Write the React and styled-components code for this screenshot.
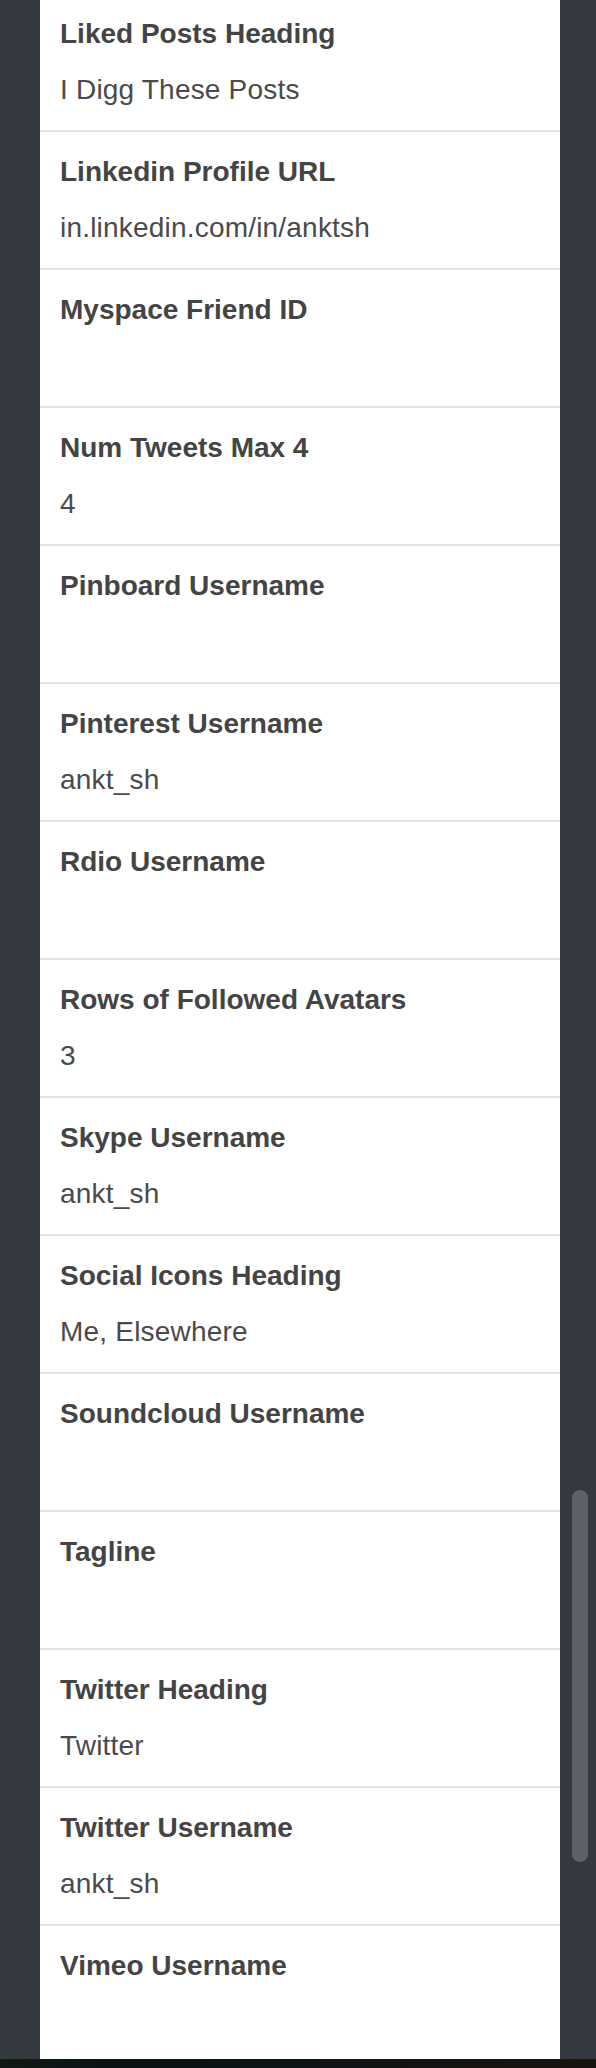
import React from "react";
import styled, { createGlobalStyle } from "styled-components";

const Global = createGlobalStyle`
  html, body { margin: 0; padding: 0; background: #353a40; }
  body { font-family: "Liberation Sans", Arial, Helvetica, sans-serif; }
`;

const Page = styled.div`
  width: 596px;
  height: 2068px;
  display: flex;
  flex-direction: column;
  overflow: hidden;
`;

const Viewport = styled.div`
  height: 2059px;
  flex: none;
  display: flex;
  background: #353a40;
  overflow: hidden;
`;

const Gutter = styled.div`
  width: ${(p) => p.$w}px;
  flex: none;
  position: relative;
`;

const Thumb = styled.div`
  position: absolute;
  left: 12px;
  top: 1490px;
  width: 16px;
  height: 372px;
  border-radius: 8px;
  background: #5c6266;
`;

const Panel = styled.div`
  width: 520px;
  flex: none;
  background: #ffffff;
  margin-top: -6px;
  align-self: flex-start;
  display: flex;
  flex-direction: column;
`;

const Row = styled.div`
  padding: 22px 20px 22px 20px;
  display: flex;
  flex-direction: column;
  gap: 20px;
  border-bottom: 2px solid #e4e4e4;
  &:last-child { border-bottom: none; }
`;

const Label = styled.div`
  font-size: 28px;
  line-height: 36px;
  font-weight: 700;
  color: #444444;
  white-space: nowrap;
`;

const Value = styled.div`
  font-size: 28px;
  line-height: 36px;
  min-height: 36px;
  font-weight: 400;
  color: #4a4a4a;
  letter-spacing: 0.2px;
  white-space: nowrap;
`;

const BottomStrip = styled.div`
  flex: 1;
  background: linear-gradient(90deg, #0f1a16 0%, #0a1114 20%, #0c1418 50%, #161310 80%, #1a1410 100%);
`;

const fields = [
  ["Liked Posts Heading", "I Digg These Posts"],
  ["Linkedin Profile URL", "in.linkedin.com/in/anktsh"],
  ["Myspace Friend ID", ""],
  ["Num Tweets Max 4", "4"],
  ["Pinboard Username", ""],
  ["Pinterest Username", "ankt_sh"],
  ["Rdio Username", ""],
  ["Rows of Followed Avatars", "3"],
  ["Skype Username", "ankt_sh"],
  ["Social Icons Heading", "Me, Elsewhere"],
  ["Soundcloud Username", ""],
  ["Tagline", ""],
  ["Twitter Heading", "Twitter"],
  ["Twitter Username", "ankt_sh"],
  ["Vimeo Username", ""],
];

export default function App() {
  return (
    <Page>
      <Global />
      <Viewport>
        <Gutter $w={40} />
        <Panel>
          {fields.map(([label, value]) => (
            <Row key={label}>
              <Label>{label}</Label>
              <Value>{value}</Value>
            </Row>
          ))}
        </Panel>
        <Gutter $w={36}>
          <Thumb />
        </Gutter>
      </Viewport>
      <BottomStrip />
    </Page>
  );
}
